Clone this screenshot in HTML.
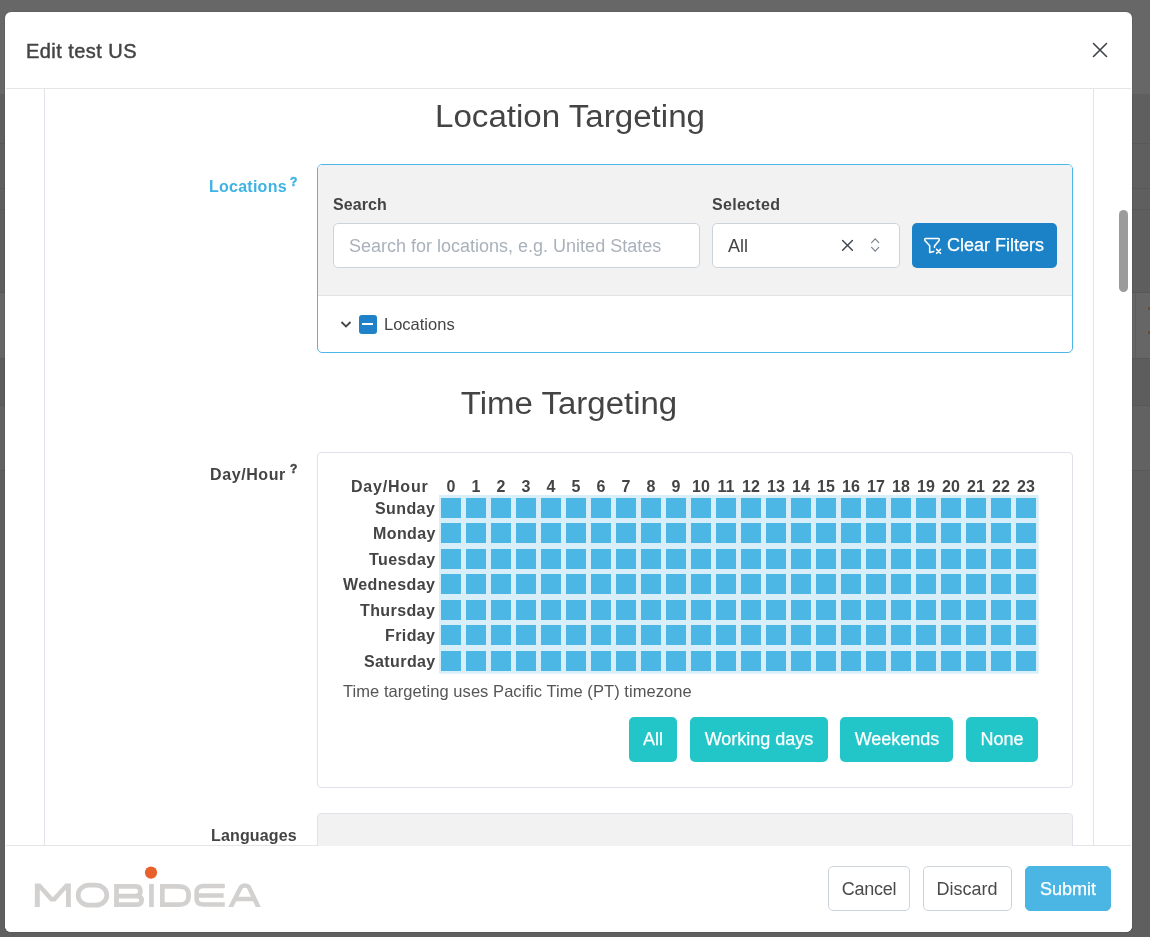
<!DOCTYPE html>
<html><head><meta charset="utf-8">
<style>
*{box-sizing:border-box;margin:0;padding:0}
html,body{width:1150px;height:937px;overflow:hidden}
body{background:#666;font-family:"Liberation Sans",sans-serif;position:relative;color:#444}
.a{position:absolute;white-space:nowrap;line-height:1;will-change:transform}
.bg{position:absolute;left:0;width:1150px;height:1px;background:#5e5e5e}
.modal{position:absolute;left:5px;top:12px;width:1127px;height:920px;background:#fff;border-radius:6px;box-shadow:0 0 0 1px rgba(0,0,0,.06)}
.hl{position:absolute;height:1px;background:#e5e5e5}
.vl{position:absolute;width:1px;background:#e3e4ea}
.btn{position:absolute;border-radius:5px}
.cell{position:absolute;width:20.5px;height:20.2px;background:#4cb6e4}
</style></head>
<body>
<div class="bg" style="top:0px;height:94px;background:#676767"></div>
<div class="bg" style="top:94px;height:115px;background:#5f5f5f"></div>
<div class="bg" style="top:209px;height:83px;background:#5e5e5e"></div>
<div class="bg" style="top:292px;height:66px;background:#666666"></div>
<div class="bg" style="top:358px;height:47px;background:#5d5d5d"></div>
<div class="bg" style="top:405px;height:65px;background:#626262"></div>
<div class="bg" style="top:470px;height:467px;background:#5f5f5f"></div>
<div class="bg" style="left:1135px;width:1px;top:292px;height:66px;background:#5e5e5e"></div>
<div class="bg" style="left:1148px;width:2px;top:306.5px;height:3px;background:#6e4a30"></div>
<div class="bg" style="left:1148px;width:2px;top:331px;height:3px;background:#6e4a30"></div>
<div class="bg" style="top:143px;height:1px;background:#585858"></div>
<div class="bg" style="top:188px;height:1px;background:#585858"></div>
<div class="bg" style="top:209px;height:1px;background:#585858"></div>
<div class="bg" style="top:292px;height:1px;background:#585858"></div>
<div class="bg" style="top:358px;height:1px;background:#585858"></div>
<div class="bg" style="top:405px;height:1px;background:#585858"></div>
<div class="bg" style="top:470px;height:1px;background:#585858"></div>
<div class="modal"></div>
<div class="a" style="top:41.07px;font-size:20px;color:#444;font-weight:normal;letter-spacing:0.45px;left:25.9px;-webkit-text-stroke:0.45px #444;">Edit test US</div>
<svg class="a" style="left:1092px;top:42.4px" width="16" height="16" viewBox="0 0 16 16"><path d="M1.5 1.5L14.5 14.5M14.5 1.5L1.5 14.5" stroke="#3f444a" stroke-width="1.6" stroke-linecap="round"/></svg>
<div class="hl" style="left:6px;top:88px;width:1125px"></div>
<div class="vl" style="left:44px;top:89px;height:756px"></div>
<div class="vl" style="left:1093px;top:89px;height:756px"></div>
<div class="a" style="left:1119px;top:210px;width:9px;height:82px;border-radius:5px;background:#9b9b9b"></div>
<div class="hl" style="left:6px;top:845px;width:1125px"></div>
<div class="a" style="top:100.76px;font-size:31px;color:#444;font-weight:normal;left:269.6px;width:600px;text-align:center;transform:scaleX(1.068);">Location Targeting</div>
<div class="a" style="top:179.46px;font-size:16px;color:#3db3e3;font-weight:bold;letter-spacing:0.25px;right:862.8px;text-align:right;">Locations</div>
<div class="a" style="top:175.54px;font-size:12px;color:#3db3e3;font-weight:bold;left:290px;-webkit-text-stroke:0.4px #3db3e3;">?</div>
<div class="a" style="left:317px;top:164px;width:756px;height:189px;border:1px solid #4cb8e6;border-radius:5px;background:#fff;overflow:hidden"><div style="position:absolute;left:0;top:0;width:100%;height:131px;background:#f2f2f2;border-bottom:1px solid #e3e3e3"></div></div>
<div class="a" style="top:196.86px;font-size:16px;color:#444;font-weight:bold;letter-spacing:0.1px;left:332.5px;">Search</div>
<div class="a" style="top:196.86px;font-size:16px;color:#444;font-weight:bold;letter-spacing:0.3px;left:712.3px;">Selected</div>
<div class="a" style="left:333px;top:223px;width:367px;height:45px;border:1px solid #ccd3da;border-radius:5px;background:#fff"></div>
<div class="a" style="top:236.76px;font-size:18px;color:#a9b2bc;font-weight:normal;left:349px;">Search for locations, e.g. United States</div>
<div class="a" style="left:712px;top:223px;width:188px;height:45px;border:1px solid #ccd3da;border-radius:5px;background:#fff"></div>
<div class="a" style="top:236.76px;font-size:18px;color:#444;font-weight:normal;left:727.6px;">All</div>
<svg class="a" style="left:840px;top:238px" width="14" height="14" viewBox="0 0 14 14"><path d="M2.6 2.6L12.4 12.3M12.4 2.6L2.6 12.3" stroke="#3f4651" stroke-width="1.45" stroke-linecap="round"/></svg>
<svg class="a" style="left:869px;top:237px" width="12" height="16" viewBox="0 0 12 16"><path d="M2.6 5.6L6.2 1.8L9.7 5.6M2.6 10.3L6.2 14.1L9.7 10.3" stroke="#78818b" stroke-width="1.2" fill="none" stroke-linecap="round"/></svg>
<div class="btn" style="left:912px;top:223px;width:145px;height:45px;background:#1c82c7"></div>
<svg class="a" style="left:922px;top:235px" width="22" height="22" viewBox="0 0 22 22"><path d="M12.5 12.4V11L16.9 5.8C17.6 5 17.3 3.4 16.2 3.4H3.8C2.7 3.4 2.4 5 3.1 5.8L7.7 10.8V17.4L11.7 16.4" stroke="#fff" stroke-width="1.55" fill="none" stroke-linejoin="round" stroke-linecap="round"/><path d="M14.6 14.4L18.5 18.3M18.5 14.4L14.6 18.3" stroke="#fff" stroke-width="1.6" stroke-linecap="round"/></svg>
<div class="a" style="top:235.76px;font-size:18px;color:#fff;font-weight:normal;left:947px;-webkit-text-stroke:0.25px #fff;">Clear Filters</div>
<svg class="a" style="left:340px;top:319.8px" width="12" height="10" viewBox="0 0 12 10"><path d="M1.5 2L6 6.5L10.5 2" stroke="#444" stroke-width="1.8" fill="none"/></svg>
<div class="a" style="left:359px;top:315px;width:18px;height:19px;border-radius:3px;background:#1f82c8"><div style="position:absolute;left:3px;top:7.9px;width:11.3px;height:2.3px;background:#fff"></div></div>
<div class="a" style="top:315.83px;font-size:16.5px;color:#444;font-weight:normal;left:384px;">Locations</div>
<div class="a" style="top:388.16px;font-size:31px;color:#444;font-weight:normal;left:268.9px;width:600px;text-align:center;transform:scaleX(1.064);">Time Targeting</div>
<div class="a" style="top:466.66px;font-size:16px;color:#444;font-weight:bold;letter-spacing:0.6px;right:864px;text-align:right;">Day/Hour</div>
<div class="a" style="top:462.84px;font-size:12px;color:#444;font-weight:bold;left:290.3px;-webkit-text-stroke:0.4px #444;">?</div>
<div class="a" style="left:317px;top:452px;width:756px;height:336px;border:1px solid #dfe2e8;border-radius:4px;background:#fff"></div>
<div class="a" style="top:478.76px;font-size:16px;color:#444;font-weight:bold;letter-spacing:0.8px;right:721.2px;text-align:right;">Day/Hour</div>
<div class="a" style="top:478.96px;font-size:16px;color:#444;font-weight:bold;left:150.85000000000002px;width:600px;text-align:center;">0</div>
<div class="a" style="top:478.96px;font-size:16px;color:#444;font-weight:bold;left:175.85000000000002px;width:600px;text-align:center;">1</div>
<div class="a" style="top:478.96px;font-size:16px;color:#444;font-weight:bold;left:200.85000000000002px;width:600px;text-align:center;">2</div>
<div class="a" style="top:478.96px;font-size:16px;color:#444;font-weight:bold;left:225.85000000000002px;width:600px;text-align:center;">3</div>
<div class="a" style="top:478.96px;font-size:16px;color:#444;font-weight:bold;left:250.85000000000002px;width:600px;text-align:center;">4</div>
<div class="a" style="top:478.96px;font-size:16px;color:#444;font-weight:bold;left:275.85px;width:600px;text-align:center;">5</div>
<div class="a" style="top:478.96px;font-size:16px;color:#444;font-weight:bold;left:300.85px;width:600px;text-align:center;">6</div>
<div class="a" style="top:478.96px;font-size:16px;color:#444;font-weight:bold;left:325.85px;width:600px;text-align:center;">7</div>
<div class="a" style="top:478.96px;font-size:16px;color:#444;font-weight:bold;left:350.85px;width:600px;text-align:center;">8</div>
<div class="a" style="top:478.96px;font-size:16px;color:#444;font-weight:bold;left:375.85px;width:600px;text-align:center;">9</div>
<div class="a" style="top:478.96px;font-size:16px;color:#444;font-weight:bold;left:400.85px;width:600px;text-align:center;">10</div>
<div class="a" style="top:478.96px;font-size:16px;color:#444;font-weight:bold;left:425.85px;width:600px;text-align:center;">11</div>
<div class="a" style="top:478.96px;font-size:16px;color:#444;font-weight:bold;left:450.85px;width:600px;text-align:center;">12</div>
<div class="a" style="top:478.96px;font-size:16px;color:#444;font-weight:bold;left:475.85px;width:600px;text-align:center;">13</div>
<div class="a" style="top:478.96px;font-size:16px;color:#444;font-weight:bold;left:500.85px;width:600px;text-align:center;">14</div>
<div class="a" style="top:478.96px;font-size:16px;color:#444;font-weight:bold;left:525.85px;width:600px;text-align:center;">15</div>
<div class="a" style="top:478.96px;font-size:16px;color:#444;font-weight:bold;left:550.85px;width:600px;text-align:center;">16</div>
<div class="a" style="top:478.96px;font-size:16px;color:#444;font-weight:bold;left:575.85px;width:600px;text-align:center;">17</div>
<div class="a" style="top:478.96px;font-size:16px;color:#444;font-weight:bold;left:600.85px;width:600px;text-align:center;">18</div>
<div class="a" style="top:478.96px;font-size:16px;color:#444;font-weight:bold;left:625.85px;width:600px;text-align:center;">19</div>
<div class="a" style="top:478.96px;font-size:16px;color:#444;font-weight:bold;left:650.85px;width:600px;text-align:center;">20</div>
<div class="a" style="top:478.96px;font-size:16px;color:#444;font-weight:bold;left:675.85px;width:600px;text-align:center;">21</div>
<div class="a" style="top:478.96px;font-size:16px;color:#444;font-weight:bold;left:700.85px;width:600px;text-align:center;">22</div>
<div class="a" style="top:478.96px;font-size:16px;color:#444;font-weight:bold;left:725.8499999999999px;width:600px;text-align:center;">23</div>
<div class="a" style="left:438.6px;top:495.4px;width:599.6px;height:177.8px;background:#d8eef8;box-shadow:0 0 1px 0.5px #e4f3fa;will-change:auto"></div>
<div class="a" style="top:500.66px;font-size:16px;color:#444;font-weight:bold;letter-spacing:0.4px;right:714.6px;text-align:right;">Sunday</div>
<div class="cell" style="left:440.60px;top:497.70px"></div>
<div class="cell" style="left:465.60px;top:497.70px"></div>
<div class="cell" style="left:490.60px;top:497.70px"></div>
<div class="cell" style="left:515.60px;top:497.70px"></div>
<div class="cell" style="left:540.60px;top:497.70px"></div>
<div class="cell" style="left:565.60px;top:497.70px"></div>
<div class="cell" style="left:590.60px;top:497.70px"></div>
<div class="cell" style="left:615.60px;top:497.70px"></div>
<div class="cell" style="left:640.60px;top:497.70px"></div>
<div class="cell" style="left:665.60px;top:497.70px"></div>
<div class="cell" style="left:690.60px;top:497.70px"></div>
<div class="cell" style="left:715.60px;top:497.70px"></div>
<div class="cell" style="left:740.60px;top:497.70px"></div>
<div class="cell" style="left:765.60px;top:497.70px"></div>
<div class="cell" style="left:790.60px;top:497.70px"></div>
<div class="cell" style="left:815.60px;top:497.70px"></div>
<div class="cell" style="left:840.60px;top:497.70px"></div>
<div class="cell" style="left:865.60px;top:497.70px"></div>
<div class="cell" style="left:890.60px;top:497.70px"></div>
<div class="cell" style="left:915.60px;top:497.70px"></div>
<div class="cell" style="left:940.60px;top:497.70px"></div>
<div class="cell" style="left:965.60px;top:497.70px"></div>
<div class="cell" style="left:990.60px;top:497.70px"></div>
<div class="cell" style="left:1015.60px;top:497.70px"></div>
<div class="a" style="top:526.18px;font-size:16px;color:#444;font-weight:bold;letter-spacing:0.4px;right:714.6px;text-align:right;">Monday</div>
<div class="cell" style="left:440.60px;top:523.22px"></div>
<div class="cell" style="left:465.60px;top:523.22px"></div>
<div class="cell" style="left:490.60px;top:523.22px"></div>
<div class="cell" style="left:515.60px;top:523.22px"></div>
<div class="cell" style="left:540.60px;top:523.22px"></div>
<div class="cell" style="left:565.60px;top:523.22px"></div>
<div class="cell" style="left:590.60px;top:523.22px"></div>
<div class="cell" style="left:615.60px;top:523.22px"></div>
<div class="cell" style="left:640.60px;top:523.22px"></div>
<div class="cell" style="left:665.60px;top:523.22px"></div>
<div class="cell" style="left:690.60px;top:523.22px"></div>
<div class="cell" style="left:715.60px;top:523.22px"></div>
<div class="cell" style="left:740.60px;top:523.22px"></div>
<div class="cell" style="left:765.60px;top:523.22px"></div>
<div class="cell" style="left:790.60px;top:523.22px"></div>
<div class="cell" style="left:815.60px;top:523.22px"></div>
<div class="cell" style="left:840.60px;top:523.22px"></div>
<div class="cell" style="left:865.60px;top:523.22px"></div>
<div class="cell" style="left:890.60px;top:523.22px"></div>
<div class="cell" style="left:915.60px;top:523.22px"></div>
<div class="cell" style="left:940.60px;top:523.22px"></div>
<div class="cell" style="left:965.60px;top:523.22px"></div>
<div class="cell" style="left:990.60px;top:523.22px"></div>
<div class="cell" style="left:1015.60px;top:523.22px"></div>
<div class="a" style="top:551.70px;font-size:16px;color:#444;font-weight:bold;letter-spacing:0.4px;right:714.6px;text-align:right;">Tuesday</div>
<div class="cell" style="left:440.60px;top:548.74px"></div>
<div class="cell" style="left:465.60px;top:548.74px"></div>
<div class="cell" style="left:490.60px;top:548.74px"></div>
<div class="cell" style="left:515.60px;top:548.74px"></div>
<div class="cell" style="left:540.60px;top:548.74px"></div>
<div class="cell" style="left:565.60px;top:548.74px"></div>
<div class="cell" style="left:590.60px;top:548.74px"></div>
<div class="cell" style="left:615.60px;top:548.74px"></div>
<div class="cell" style="left:640.60px;top:548.74px"></div>
<div class="cell" style="left:665.60px;top:548.74px"></div>
<div class="cell" style="left:690.60px;top:548.74px"></div>
<div class="cell" style="left:715.60px;top:548.74px"></div>
<div class="cell" style="left:740.60px;top:548.74px"></div>
<div class="cell" style="left:765.60px;top:548.74px"></div>
<div class="cell" style="left:790.60px;top:548.74px"></div>
<div class="cell" style="left:815.60px;top:548.74px"></div>
<div class="cell" style="left:840.60px;top:548.74px"></div>
<div class="cell" style="left:865.60px;top:548.74px"></div>
<div class="cell" style="left:890.60px;top:548.74px"></div>
<div class="cell" style="left:915.60px;top:548.74px"></div>
<div class="cell" style="left:940.60px;top:548.74px"></div>
<div class="cell" style="left:965.60px;top:548.74px"></div>
<div class="cell" style="left:990.60px;top:548.74px"></div>
<div class="cell" style="left:1015.60px;top:548.74px"></div>
<div class="a" style="top:577.22px;font-size:16px;color:#444;font-weight:bold;letter-spacing:0.4px;right:714.6px;text-align:right;">Wednesday</div>
<div class="cell" style="left:440.60px;top:574.26px"></div>
<div class="cell" style="left:465.60px;top:574.26px"></div>
<div class="cell" style="left:490.60px;top:574.26px"></div>
<div class="cell" style="left:515.60px;top:574.26px"></div>
<div class="cell" style="left:540.60px;top:574.26px"></div>
<div class="cell" style="left:565.60px;top:574.26px"></div>
<div class="cell" style="left:590.60px;top:574.26px"></div>
<div class="cell" style="left:615.60px;top:574.26px"></div>
<div class="cell" style="left:640.60px;top:574.26px"></div>
<div class="cell" style="left:665.60px;top:574.26px"></div>
<div class="cell" style="left:690.60px;top:574.26px"></div>
<div class="cell" style="left:715.60px;top:574.26px"></div>
<div class="cell" style="left:740.60px;top:574.26px"></div>
<div class="cell" style="left:765.60px;top:574.26px"></div>
<div class="cell" style="left:790.60px;top:574.26px"></div>
<div class="cell" style="left:815.60px;top:574.26px"></div>
<div class="cell" style="left:840.60px;top:574.26px"></div>
<div class="cell" style="left:865.60px;top:574.26px"></div>
<div class="cell" style="left:890.60px;top:574.26px"></div>
<div class="cell" style="left:915.60px;top:574.26px"></div>
<div class="cell" style="left:940.60px;top:574.26px"></div>
<div class="cell" style="left:965.60px;top:574.26px"></div>
<div class="cell" style="left:990.60px;top:574.26px"></div>
<div class="cell" style="left:1015.60px;top:574.26px"></div>
<div class="a" style="top:602.74px;font-size:16px;color:#444;font-weight:bold;letter-spacing:0.4px;right:714.6px;text-align:right;">Thursday</div>
<div class="cell" style="left:440.60px;top:599.78px"></div>
<div class="cell" style="left:465.60px;top:599.78px"></div>
<div class="cell" style="left:490.60px;top:599.78px"></div>
<div class="cell" style="left:515.60px;top:599.78px"></div>
<div class="cell" style="left:540.60px;top:599.78px"></div>
<div class="cell" style="left:565.60px;top:599.78px"></div>
<div class="cell" style="left:590.60px;top:599.78px"></div>
<div class="cell" style="left:615.60px;top:599.78px"></div>
<div class="cell" style="left:640.60px;top:599.78px"></div>
<div class="cell" style="left:665.60px;top:599.78px"></div>
<div class="cell" style="left:690.60px;top:599.78px"></div>
<div class="cell" style="left:715.60px;top:599.78px"></div>
<div class="cell" style="left:740.60px;top:599.78px"></div>
<div class="cell" style="left:765.60px;top:599.78px"></div>
<div class="cell" style="left:790.60px;top:599.78px"></div>
<div class="cell" style="left:815.60px;top:599.78px"></div>
<div class="cell" style="left:840.60px;top:599.78px"></div>
<div class="cell" style="left:865.60px;top:599.78px"></div>
<div class="cell" style="left:890.60px;top:599.78px"></div>
<div class="cell" style="left:915.60px;top:599.78px"></div>
<div class="cell" style="left:940.60px;top:599.78px"></div>
<div class="cell" style="left:965.60px;top:599.78px"></div>
<div class="cell" style="left:990.60px;top:599.78px"></div>
<div class="cell" style="left:1015.60px;top:599.78px"></div>
<div class="a" style="top:628.26px;font-size:16px;color:#444;font-weight:bold;letter-spacing:0.4px;right:714.6px;text-align:right;">Friday</div>
<div class="cell" style="left:440.60px;top:625.30px"></div>
<div class="cell" style="left:465.60px;top:625.30px"></div>
<div class="cell" style="left:490.60px;top:625.30px"></div>
<div class="cell" style="left:515.60px;top:625.30px"></div>
<div class="cell" style="left:540.60px;top:625.30px"></div>
<div class="cell" style="left:565.60px;top:625.30px"></div>
<div class="cell" style="left:590.60px;top:625.30px"></div>
<div class="cell" style="left:615.60px;top:625.30px"></div>
<div class="cell" style="left:640.60px;top:625.30px"></div>
<div class="cell" style="left:665.60px;top:625.30px"></div>
<div class="cell" style="left:690.60px;top:625.30px"></div>
<div class="cell" style="left:715.60px;top:625.30px"></div>
<div class="cell" style="left:740.60px;top:625.30px"></div>
<div class="cell" style="left:765.60px;top:625.30px"></div>
<div class="cell" style="left:790.60px;top:625.30px"></div>
<div class="cell" style="left:815.60px;top:625.30px"></div>
<div class="cell" style="left:840.60px;top:625.30px"></div>
<div class="cell" style="left:865.60px;top:625.30px"></div>
<div class="cell" style="left:890.60px;top:625.30px"></div>
<div class="cell" style="left:915.60px;top:625.30px"></div>
<div class="cell" style="left:940.60px;top:625.30px"></div>
<div class="cell" style="left:965.60px;top:625.30px"></div>
<div class="cell" style="left:990.60px;top:625.30px"></div>
<div class="cell" style="left:1015.60px;top:625.30px"></div>
<div class="a" style="top:653.78px;font-size:16px;color:#444;font-weight:bold;letter-spacing:0.4px;right:714.6px;text-align:right;">Saturday</div>
<div class="cell" style="left:440.60px;top:650.82px"></div>
<div class="cell" style="left:465.60px;top:650.82px"></div>
<div class="cell" style="left:490.60px;top:650.82px"></div>
<div class="cell" style="left:515.60px;top:650.82px"></div>
<div class="cell" style="left:540.60px;top:650.82px"></div>
<div class="cell" style="left:565.60px;top:650.82px"></div>
<div class="cell" style="left:590.60px;top:650.82px"></div>
<div class="cell" style="left:615.60px;top:650.82px"></div>
<div class="cell" style="left:640.60px;top:650.82px"></div>
<div class="cell" style="left:665.60px;top:650.82px"></div>
<div class="cell" style="left:690.60px;top:650.82px"></div>
<div class="cell" style="left:715.60px;top:650.82px"></div>
<div class="cell" style="left:740.60px;top:650.82px"></div>
<div class="cell" style="left:765.60px;top:650.82px"></div>
<div class="cell" style="left:790.60px;top:650.82px"></div>
<div class="cell" style="left:815.60px;top:650.82px"></div>
<div class="cell" style="left:840.60px;top:650.82px"></div>
<div class="cell" style="left:865.60px;top:650.82px"></div>
<div class="cell" style="left:890.60px;top:650.82px"></div>
<div class="cell" style="left:915.60px;top:650.82px"></div>
<div class="cell" style="left:940.60px;top:650.82px"></div>
<div class="cell" style="left:965.60px;top:650.82px"></div>
<div class="cell" style="left:990.60px;top:650.82px"></div>
<div class="cell" style="left:1015.60px;top:650.82px"></div>
<div class="a" style="top:683.13px;font-size:16.5px;color:#555;font-weight:normal;letter-spacing:0.06px;left:342.6px;">Time targeting uses Pacific Time (PT) timezone</div>
<div class="btn" style="left:629px;top:717px;width:48px;height:45px;background:#22c6c9"></div>
<div class="a" style="top:729.76px;font-size:18px;color:#fff;font-weight:normal;left:353.0px;width:600px;text-align:center;-webkit-text-stroke:0.25px #fff;">All</div>
<div class="btn" style="left:690px;top:717px;width:138px;height:45px;background:#22c6c9"></div>
<div class="a" style="top:729.76px;font-size:18px;color:#fff;font-weight:normal;left:459.0px;width:600px;text-align:center;-webkit-text-stroke:0.25px #fff;">Working days</div>
<div class="btn" style="left:840px;top:717px;width:113px;height:45px;background:#22c6c9"></div>
<div class="a" style="top:729.76px;font-size:18px;color:#fff;font-weight:normal;left:596.5px;width:600px;text-align:center;-webkit-text-stroke:0.25px #fff;">Weekends</div>
<div class="btn" style="left:966px;top:717px;width:72px;height:45px;background:#22c6c9"></div>
<div class="a" style="top:729.76px;font-size:18px;color:#fff;font-weight:normal;left:702.0px;width:600px;text-align:center;-webkit-text-stroke:0.25px #fff;">None</div>
<div class="a" style="top:827.66px;font-size:16px;color:#444;font-weight:bold;letter-spacing:0.15px;right:853.7px;text-align:right;">Languages</div>
<div class="a" style="left:317px;top:813px;width:756px;height:60px;border:1px solid #dfe2e8;border-radius:4px;background:#f2f2f2"></div>
<div class="a" style="left:5px;top:846px;width:1127px;height:86px;background:#fff;border-radius:0 0 6px 6px"></div>
<svg class="a" style="left:0;top:0;will-change:auto" width="300" height="937" viewBox="0 0 300 937"><defs><clipPath id="lc"><rect x="200" y="870" width="80" height="37.1"/></clipPath></defs><circle cx="151" cy="872.6" r="6.1" fill="#e8602b"/><g fill="#d3d1d0"><path d="M34.85 907.1V883.6H40.3L52.85 897.2L65.4 883.6H70.85V907.1H66V889.6L55.3 901.6H50.4L39.8 889.6V907.1Z"/><rect x="149.1" y="883.9" width="4.7" height="23.1"/></g><g fill="none" stroke="#d3d1d0" stroke-width="4.75"><rect x="78.2" y="885.2" width="28.5" height="20" rx="11" ry="9.5"/><path d="M116.5 896V886.3H135.5Q140.4 886.3 140.4 891.15Q140.4 896 135.5 896ZM116.5 904.6V896H137Q141.6 896 141.6 900.3Q141.6 904.6 137 904.6Z"/><path d="M162.35 904.6V886.3H178C186 886.3 188.6 889 188.6 895.45C188.6 902 186 904.6 178 904.6Z"/></g><g fill="none" stroke="#d3d1d0" stroke-width="4.5"><path d="M224.8 886.1H203.5C199 886.1 196.6 888.5 196.6 892V898.5C196.6 902.3 199 904.6 203.5 904.6H224.8M196.6 895.4H223.6"/><path clip-path="url(#lc)" d="M229.8 909L240.8 887.3Q242.1 885.5 244.9 885.5Q247.7 885.5 249 887.3L259.2 909M234 899H255.5"/></g></svg>
<div class="btn" style="left:828px;top:866px;width:81.5px;height:45px;background:#fff;border:1px solid #ccd3da"></div>
<div class="a" style="top:879.76px;font-size:18px;color:#444;font-weight:normal;letter-spacing:-0.25px;left:568.75px;width:600px;text-align:center;color:#4a4a4a;">Cancel</div>
<div class="btn" style="left:923px;top:866px;width:88.70000000000005px;height:45px;background:#fff;border:1px solid #ccd3da"></div>
<div class="a" style="top:879.76px;font-size:18px;color:#444;font-weight:normal;left:667.35px;width:600px;text-align:center;color:#4a4a4a;">Discard</div>
<div class="btn" style="left:1025px;top:866px;width:86px;height:45px;background:#4bb6e3;border:1px solid #4bb6e3"></div>
<div class="a" style="top:879.76px;font-size:18px;color:#fff;font-weight:normal;left:768.0px;width:600px;text-align:center;-webkit-text-stroke:0.25px #fff;">Submit</div>
</body></html>
